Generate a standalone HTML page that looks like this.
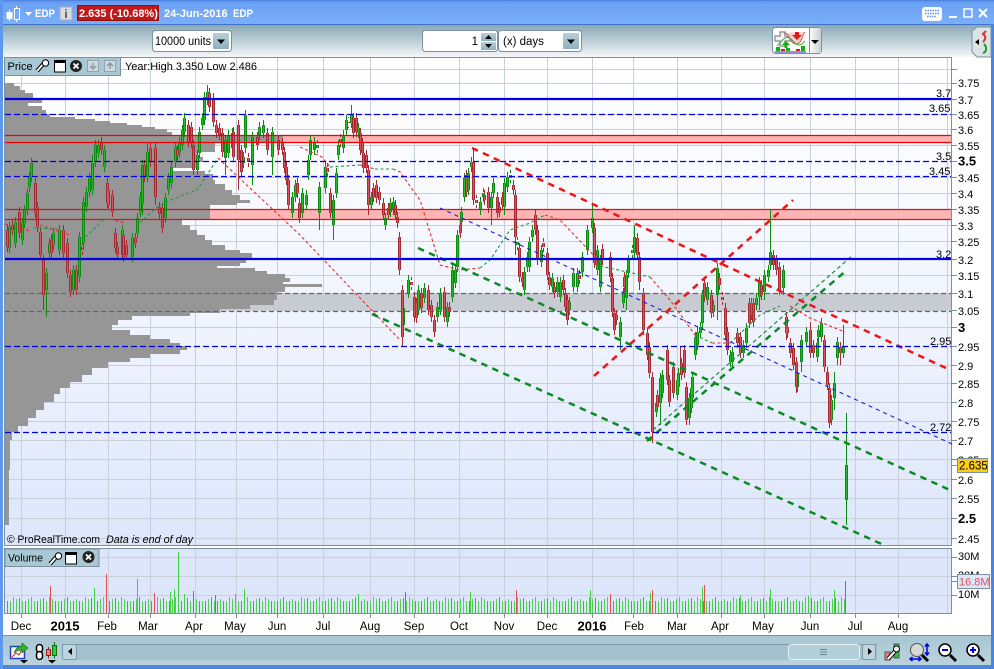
<!DOCTYPE html>
<html><head><meta charset="utf-8"><title>EDP</title>
<style>
html,body{margin:0;padding:0;width:994px;height:669px;overflow:hidden;background:#fff}
svg{display:block}
text{font-family:"Liberation Sans",sans-serif;font-size:11px;fill:#000}
.t{font-weight:bold;fill:#fff;font-size:11px}
.a{font-size:11px}
.b{font-size:13px;font-weight:bold}
.m{text-anchor:middle;font-size:11.500px}
</style></head><body>
<svg width="994" height="669" viewBox="0 0 994 669" xmlns="http://www.w3.org/2000/svg">
<defs>
<linearGradient id="tb" x1="0" y1="0" x2="0" y2="1"><stop offset="0" stop-color="#5f96ee"/><stop offset=".15" stop-color="#6da3f4"/><stop offset="1" stop-color="#7aaef9"/></linearGradient>
<linearGradient id="tl" x1="0" y1="0" x2="0" y2="1"><stop offset="0" stop-color="#8aa9b5"/><stop offset=".5" stop-color="#bccfd6"/><stop offset="1" stop-color="#f6f8f9"/></linearGradient>
<linearGradient id="ch" x1="0" y1="0" x2="0" y2="1"><stop offset="0" stop-color="#ffffff"/><stop offset=".5" stop-color="#f1f5fe"/><stop offset="1" stop-color="#dde6fb"/></linearGradient>
<linearGradient id="bt" x1="0" y1="0" x2="0" y2="1"><stop offset="0" stop-color="#a7c6d3"/><stop offset="1" stop-color="#b9d3dd"/></linearGradient>
<linearGradient id="btn" x1="0" y1="0" x2="0" y2="1"><stop offset="0" stop-color="#b8cfd9"/><stop offset="1" stop-color="#8fb0bf"/></linearGradient>
<linearGradient id="g2" x1="0" y1="0" x2="1" y2="0"><stop offset="0" stop-color="#fff"/><stop offset="1" stop-color="#c8d0d4"/></linearGradient>
<path id="gb" d="M9 227V248M15 222V243M22 223V240M24 210V223M27 193V210M29 177V187M31 163V177M46 273V290M49 243V253M53 233V245M59 230V250M73 270V290M79 237V277M83 202V243M86 192V207M89 178V192M92 163V190M95 145V162M98 145V153M104 150V167M122 230V255M132 238V257M137 218V233M140 197V212M142 165V203M147 152V177M165 198V218M168 178V190M171 167V183M175 147V162M179 142V153M182 130V145M184 118V132M197 155V170M199 132V153M202 118V125M204 97V120M207 92V100M225 140V158M228 135V153M232 133V148M243 157V163M245 115V148M252 137V165M259 127V135M263 125V133M272 132V157M292 197V213M295 185V197M302 193V213M306 195V205M308 160V175M310 140V155M314 142V150M317 145V148M319 187V213M325 167V188M333 200V225M336 173V193M338 145V155M343 135V148M346 120V130M351 115V123M358 128V133M371 197V205M385 218V225M390 203V212M393 202V210M403 308V325M408 280V293M418 290V310M424 288V298M437 307V317M440 293V310M447 307V322M452 270V297M455 270V283M457 235V267M461 212V222M464 178V197M468 173V190M471 162V167M480 202V210M483 193V197M491 197V208M493 183V193M504 183V207M507 177V187M510 175V178M517 242V245M524 272V290M527 257V267M529 242V267M532 230V237M541 250V262M552 278V287M557 282V292M560 282V297M569 302V310M573 273V287M577 273V287M582 257V272M587 230V250M592 218V228M597 250V270M600 260V287M620 322V337M623 293V303M626 275V298M628 260V273M632 250V253M634 237V253M656 403V412M660 378V403M662 375V393M677 380V395M678 373V387M689 398V418M691 388V408M692 377V398M695 337V355M697 332V345M700 327V333M702 295V323M707 287V300M713 305V312M717 268V295M730 355V362M732 352V362M743 345V353M746 328V343M751 303V315M756 298V305M759 282V297M764 275V292M768 270V277M770 252V265M783 270V288M797 373V387M801 340V362M806 332V342M817 343V357M818 330V337M821 323V337M831 400V420M834 383V398M837 342V358M843 347V353M846 465V500"/>
<path id="rb" d="M7 230V247M12 225V230M19 212V233M35 183V213M37 207V227M40 232V255M43 260V295M51 240V253M63 230V253M67 243V273M70 275V292M76 270V290M82 247V250M101 142V150M107 183V203M108 190V205M112 195V212M115 233V248M117 247V255M123 235V257M126 245V255M135 238V243M144 165V177M150 148V162M155 148V197M159 207V214M162 208V228M177 150V155M188 125V142M191 127V143M193 145V170M209 93V107M213 98V122M216 125V133M219 128V135M222 133V152M233 132V157M238 125V160M241 150V172M248 158V162M257 137V145M267 133V150M278 140V150M282 143V150M284 152V168M286 167V180M288 180V205M297 183V193M299 203V218M327 168V172M330 193V213M340 139V142M348 122V123M353 118V133M356 118V132M360 133V150M362 143V153M363 153V168M366 155V168M368 170V205M373 188V197M376 185V198M379 192V200M383 203V215M388 208V215M395 205V215M397 217V223M399 237V270M402 290V337M411 282V285M414 297V317M416 303V318M421 293V308M428 290V310M431 305V317M434 320V332M444 292V317M449 307V312M460 225V233M466 175V192M473 162V200M476 200V203M484 195V200M488 192V208M497 197V213M499 207V212M502 197V205M513 185V190M515 195V237M519 248V277M522 277V282M535 215V230M537 230V260M543 243V247M547 253V275M549 277V285M554 287V293M563 280V290M565 293V307M567 300V320M579 275V279M594 228V263M596 255V265M602 249V260M610 257V277M612 278V312M614 313V330M616 315V320M624 277V287M637 238V255M639 257V282M643 293V330M647 333V355M649 347V373M652 377V432M657 395V407M667 350V380M669 380V402M673 367V393M681 363V375M684 350V373M686 387V420M704 283V297M711 295V313M719 278V285M722 297V300M725 308V335M727 332V350M737 333V343M740 337V353M749 303V323M753 303V322M761 285V295M773 255V265M776 260V270M779 267V290M786 317V333M787 327V333M790 343V353M793 348V365M796 362V387M810 330V353M813 345V353M824 340V367M827 372V385M829 388V423M840 347V353"/>
</defs>

<!-- window frame -->
<rect width="994" height="669" fill="#4d85de"/>
<rect x="0" y="1" width="994" height="23" fill="url(#tb)"/>
<rect x="0" y="0" width="3" height="669" fill="#5f96ee"/>
<rect x="3" y="25" width="988" height="640" fill="#fff"/>
<rect x="3" y="25" width="988" height="32" fill="url(#tl)"/>
<rect x="3" y="24" width="988" height="1" fill="#3f74c8"/>

<!-- title bar -->
<path d="M7 12.500h5v6h-5zM9.500 10v11" fill="#fff" stroke="#fff"/>
<rect x="14.500" y="8.500" width="5" height="11" fill="none" stroke="#fff"/>
<path d="M16.500 6v2M16.500 20v2" stroke="#fff"/>
<path d="M25 12h7l-3.500 4z" fill="#fff"/>
<text x="35" y="17" class="t" textLength="20" lengthAdjust="spacingAndGlyphs">EDP</text>
<rect x="60" y="7" width="12" height="13" fill="#d8dcdf" stroke="#aab"/>
<text x="66" y="18" text-anchor="middle" style="font-weight:bold;font-size:12px;fill:#555">i</text>
<rect x="77.500" y="5.500" width="81" height="15" fill="#c01818" stroke="#8c1010"/>
<text x="79" y="17" class="t">2.635 (-10.68%)</text>
<text x="164" y="17" class="t">24-Jun-2016</text>
<text x="233" y="17" class="t" textLength="20" lengthAdjust="spacingAndGlyphs">EDP</text>
<rect x="922" y="7" width="20" height="14" rx="3" fill="#fff"/>
<path d="M925 10.500h14M925 13.500h14M927 16.500h10" stroke="#5f96ee" stroke-width="1.500" stroke-dasharray="1.500 1"/>
<rect x="949" y="16" width="8" height="2" fill="#fff"/>
<rect x="964" y="9" width="8" height="8" fill="none" stroke="#fff" stroke-width="1.500"/>
<path d="M979 9l8 8M987 9l-8 8" stroke="#fff" stroke-width="2"/>

<!-- top toolbar -->
<rect x="152.500" y="30.500" width="79" height="21" rx="3" fill="#fff" stroke="#7a929f"/>
<text x="155" y="45" style="font-size:11.500px" textLength="56" lengthAdjust="spacingAndGlyphs">10000 units</text>
<rect x="213" y="33" width="16" height="16" rx="1" fill="url(#btn)"/>
<path d="M217 39.500h8l-4 4.500z" fill="#000"/>
<rect x="422.500" y="30.500" width="75" height="21" rx="3" fill="#fff" stroke="#7a929f"/>
<text x="478" y="45" text-anchor="end" style="font-size:11.500px">1</text>
<rect x="481" y="33" width="15" height="8" fill="url(#btn)"/><rect x="481" y="42" width="15" height="8" fill="url(#btn)"/>
<path d="M485 39h7l-3.500-4zM485 44h7l-3.500 4z" fill="#000"/>
<rect x="498.500" y="30.500" width="83" height="21" rx="3" fill="#fff" stroke="#7a929f"/>
<text x="503" y="45" style="font-size:11.500px">(x) days</text>
<rect x="563" y="33" width="16" height="16" rx="1" fill="url(#btn)"/>
<path d="M567 39.500h8l-4 4.500z" fill="#000"/>
<!-- indicator button -->
<rect x="772.500" y="27.500" width="49" height="26" rx="3" fill="#fff" stroke="#7a929f"/>
<rect x="809" y="28" width="12" height="25" fill="url(#g2)"/>
<path d="M809.500 28v25" stroke="#7a929f"/>
<path d="M811 40h8l-4 4z" fill="#000"/>
<path d="M775 36h5v-4h5v4h5v5h-5v5h-5v-5h-5z" fill="#f4f4f4" stroke="#999" stroke-width="1.500"/>
<path d="M784 33c6 0 6 11 12 11s5-7 9-12" fill="#f6cccc" stroke="#d85050" stroke-width="1"/>
<path d="M777 46c6-7 10-12 15-6s8 7 13 1" fill="none" stroke="#3cb03c"/>
<path d="M795 32h4v3h3l-5 5-5-5h3z" fill="#e01818"/>
<path d="M784 44l-4 4h2.500v3h3v-3h2.500z" fill="#13b013" transform="translate(2 -3)"/>
<path d="M776 47h4v4h-4zM786 48h4v3h-4zM801 46h4v5h-4z" fill="#13b013"/><path d="M781 49h4v2h-4zM796 49h4v2h-4z" fill="#d02020"/>
<path d="M775 52h31" stroke="#2222aa"/>
<!-- right tab -->
<path d="M991 27h-14l-5 4v21l5 5h14z" fill="#dce3e7" stroke="#7a929f"/>
<path d="M979 39v6l-4-3z" fill="#000"/>
<path d="M983 42c3-3 3-6 0-8l3-3" fill="none" stroke="#d83030" stroke-width="2"/>
<path d="M983 53c4-1 4-6 1-9" fill="none" stroke="#18a018" stroke-width="2"/>

<!-- chart panels -->
<rect x="4.500" y="57.500" width="947" height="488" fill="url(#ch)" stroke="#7a929f"/>
<rect x="4.500" y="548.500" width="947" height="65" fill="#dde6fb" stroke="#7a929f"/>

<!-- grid -->
<g stroke="#c9cedb" stroke-width="1" fill="none">
<path d="M5 69.500H951M5 83.500H951M5 114.500H951M5 129.500H951M5 145.500H951M5 177.500H951M5 193.500H951M5 209.500H951M5 225.500H951M5 241.500H951M5 275.500H951M5 293.500H951M5 310.500H951M5 327.500H951M5 365.500H951M5 383.500H951M5 402.500H951M5 421.500H951M5 440.500H951M5 459.500H951M5 479.500H951M5 498.500H951M5 518.500H951M5 538.500H951"/>
<path d="M21.500 58V545M65.500 58V545M108.500 58V545M150.500 58V545M195.500 58V545M236.500 58V545M277.500 58V545M323.500 58V545M370.500 58V545M414.500 58V545M459.500 58V545M504.500 58V545M547.500 58V545M592.500 58V545M633.500 58V545M677.500 58V545M721.500 58V545M764.500 58V545M810.500 58V545M855.500 58V545M898.500 58V545M947.500 58V545"/>
<path d="M21.500 549V613M65.500 549V613M108.500 549V613M150.500 549V613M195.500 549V613M236.500 549V613M277.500 549V613M323.500 549V613M370.500 549V613M414.500 549V613M459.500 549V613M504.500 549V613M547.500 549V613M592.500 549V613M633.500 549V613M677.500 549V613M721.500 549V613M764.500 549V613M810.500 549V613M855.500 549V613M898.500 549V613M947.500 549V613M5 557.500H951M5 576.500H951M5 595.500H951"/>
</g>

<!-- bands under profile -->
<rect x="5" y="135" width="946" height="8" fill="#ffb4b4"/>
<rect x="5" y="209" width="946" height="11" fill="#fcb4b4"/>
<rect x="5" y="293" width="946" height="18" fill="#c9cbd3"/>

<!-- volume profile -->
<path fill="#969696" d="M5 83H14V86H20V90H25V93H33V99H42V103H28V106H42V110H46V114H50V117H75V119H95V121H110V123H127V125H142V127H155V129H167V132H172V135H283V143H215V152H198V157H203V162H198V168H172V171H205V174H213V180H215V184H225V190H232V195H240V200H250V203H237V205H210V220H182V225H190V230H197V235H205V240H212V245H225V250H240V253H252V258H246V263H240V266H217V268H255V271H267V274H285V278H290V282H283V284H322V287H285V292H277V300H274V305H250V309H220V313H190V316H132V320H118V325H112V330H130V335H150V339H170V343H180V346H187V350H180V354H150V358H130V362H108V368H92V375H82V382H70V388H60V394H54V402H44V410H36V418H28V426H18V432H12V440H10V470H9V525H5z"/>

<!-- candles -->
<g fill="none" transform="translate(.5 0)">
<path stroke="#0d8a12" stroke-width="1" d="M46 290V317M770 210V252M843 325V347M846 413V525M207 85V92M351 105V115M92 155V163M147 142V152M142 203V215M225 158V175M252 165V185M272 157V175M319 213V230M333 225V240M504 207V215M491 208V225M592 205V218M620 337V350M626 298V310M634 225V237M660 403V425M689 418V425M702 323V330M717 295V320M751 315V320M759 297V310M764 292V300M783 288V295M801 362V372M818 337V345M837 358V365M834 398V410M834 372V383"/>
<path stroke="#a52a32" stroke-width="1" d="M43 295V310M155 197V205M238 160V190M213 110V125M402 337V347M368 205V215M473 148V162M515 237V255M652 432V443M680 347V363M810 322V330M829 423V426M639 282V290M643 330V335M786 333V340M796 387V393M840 355V365"/>
<use href="#gb" y="-5" stroke="#0d8a12" stroke-width="1"/>
<use href="#gb" y="5" stroke="#0d8a12" stroke-width="1"/>
<use href="#rb" y="-5" stroke="#a52a32" stroke-width="1"/>
<use href="#rb" y="5" stroke="#a52a32" stroke-width="1"/>
<use href="#gb" stroke="#0d8a12" stroke-width="3"/>
<use href="#gb" stroke="#22bd22" stroke-width="1"/>
<use href="#rb" stroke="#a52a32" stroke-width="3"/>
<use href="#rb" stroke="#d4555c" stroke-width="1"/>
</g>

<!-- band borders -->
<path d="M5 135.500H951M5 142.500H951" stroke="#f00000" stroke-width="1.200" fill="none"/>
<path d="M5 209.500H951M5 219.500H951" stroke="#e01010" stroke-width="1.200"/>
<path d="M5 293.500H951M5 311.500H951" stroke="#606468" stroke-width="1.200" stroke-dasharray="5 3"/>

<!-- thin dashed MA -->
<g fill="none" stroke-width="1.100" stroke-dasharray="3 2.500">
<path stroke="#1a9a3c" d="M33 228L58 229M80 238L87 236L103 220L110 219M140 223L157 207L173 199L197 190L207 175L218 158M330 167L360 165M375 169L393 169M480 268L490 260L510 230L530 223L545 215M600 266L650 277M695 335L712 343M730 343L760 315L780 306"/>
<path stroke="#ee2a2a" d="M5 224L30 231M40 225L70 235M110 219L125 223M218 158L300 235L400 340M300 147L322 157L330 167M360 165L375 169M393 169L400 172L420 200L440 265L460 270L480 268M545 215L560 220L600 262M650 277L670 300L695 335M712 343L730 343M790 306L810 318L845 332"/>
</g>
<path d="M440 208L952 444" stroke="#1a1ae0" stroke-width="1.100" stroke-dasharray="4 4" fill="none"/>
<path d="M653 430L853 255" stroke="#1a8a3c" stroke-width="1.200" stroke-dasharray="4 3" fill="none"/>

<!-- thick trend lines -->
<g fill="none" stroke-width="2.500" stroke-dasharray="6.500 5.500">
<path stroke="#f01414" d="M472 148L948 369M594 376L793 200"/>
<path stroke="#0c8a22" d="M418 248L952 491M372 314L886 546M647 441L847 270"/>
</g>

<!-- horizontal levels -->
<path d="M5 99H951M5 259H951" stroke="#0000e0" stroke-width="2.200"/>
<path d="M5 114.500H951M5 161.500H951M5 176.500H951M5 346.500H951M5 432.500H951" stroke="#0000e0" stroke-width="1.200" stroke-dasharray="6 3"/>

<!-- level labels -->
<text x="936" y="97">3.7</text><text x="929" y="112">3.65</text><text x="936" y="160">3.5</text><text x="929" y="175">3.45</text><text x="936" y="258">3.2</text><text x="930" y="345">2.95</text><text x="930" y="431">2.72</text>

<!-- legends -->
<rect x="4.500" y="57.500" width="116" height="18" fill="#a9c8d5" stroke="#7a929f"/>
<text x="7.500" y="70">Price</text>
<path d="M37 71L45 62" stroke="#000" stroke-width="4"/><path d="M37 71L45 62" stroke="#fff" stroke-width="2"/><circle cx="45.500" cy="63" r="3.200" fill="#fff" stroke="#000"/>
<rect x="54.500" y="60.500" width="11" height="11.500" fill="#fff" stroke="#000"/><rect x="54" y="60" width="12" height="3" fill="#000"/>
<circle cx="76" cy="66" r="6" fill="#222"/><path d="M73.500 63.500l5 5M78.500 63.500l-5 5" stroke="#fff" stroke-width="1.800"/>
<rect x="87.500" y="60.500" width="11" height="11" fill="#cfdadf" stroke="#93a4ad"/><path d="M93 63v6M90 66l3 3 3-3" stroke="#8a9aa2" stroke-width="1.500" fill="none"/>
<rect x="104.500" y="60.500" width="11" height="11" fill="#cfdadf" stroke="#93a4ad"/><path d="M110 69v-6M107 66l3-3 3 3" stroke="#8a9aa2" stroke-width="1.500" fill="none"/>
<text x="125" y="70" textLength="132" lengthAdjust="spacingAndGlyphs">Year:High 3.350 Low 2.486</text>
<text x="7" y="543" textLength="93" lengthAdjust="spacingAndGlyphs">&#169; ProRealTime.com</text>
<text x="106" y="543" style="font-style:italic" textLength="87" lengthAdjust="spacingAndGlyphs">Data is end of day</text>

<!-- axis -->
<path d="M952 69.500h5M952 83.500h5M952 99.500h5M952 114.500h5M952 129.500h5M952 145.500h5M952 161.500h5M952 177.500h5M952 193.500h5M952 209.500h5M952 225.500h5M952 241.500h5M952 259.500h5M952 275.500h5M952 293.500h5M952 310.500h5M952 327.500h5M952 346.500h5M952 365.500h5M952 383.500h5M952 402.500h5M952 421.500h5M952 440.500h5M952 459.500h5M952 465.500h5M952 479.500h5M952 498.500h5M952 518.500h5M952 538.500h5M952 557.500h5M952 576.500h5M952 595.500h5M952 581.500h5" stroke="#7a929f"/>
<text x="958" y="87">3.75</text><text x="958" y="104">3.7</text><text x="958" y="119">3.65</text><text x="958" y="134">3.6</text><text x="958" y="150">3.55</text><text class="b" x="958" y="165.500">3.5</text><text x="958" y="182">3.45</text><text x="958" y="198">3.4</text><text x="958" y="214">3.35</text><text x="958" y="230">3.3</text><text x="958" y="246">3.25</text><text x="958" y="264">3.2</text><text x="958" y="280">3.15</text><text x="958" y="298">3.1</text><text x="958" y="315">3.05</text><text class="b" x="958" y="332">3</text><text x="958" y="351">2.95</text><text x="958" y="370">2.9</text><text x="958" y="388">2.85</text><text x="958" y="407">2.8</text><text x="958" y="426">2.75</text><text x="958" y="445">2.7</text><text x="958" y="464">2.65</text><text x="958" y="484">2.6</text><text x="958" y="503">2.55</text><text class="b" x="958" y="523">2.5</text><text x="958" y="543">2.45</text>
<text x="958" y="560">30M</text><text x="958" y="579">20M</text><text x="958" y="598">10M</text>
<rect x="957.500" y="458.500" width="30" height="14" fill="#fdcb12" stroke="#7a929f"/>
<text x="959" y="469.500" style="font-size:11.500px">2.635</text>
<rect x="957.500" y="574.500" width="32" height="14" fill="#dde6fb" stroke="#7a929f"/>
<text x="959" y="585.500" style="fill:#e05656">16.8M</text>

<!-- volume -->
<g fill="none">
<path d="M10 607H846" stroke="#4fd24f" stroke-width="12" stroke-dasharray="1 5"/>
<path d="M7 607H846" stroke="#e05c5c" stroke-width="12" stroke-dasharray="1 5"/>
<path d="M13 605H846" stroke="#4fd24f" stroke-width="16" stroke-dasharray="1 17"/>
<path d="M19 605.500H846" stroke="#e05c5c" stroke-width="15" stroke-dasharray="1 23"/>
<path d="M16 606H846" stroke="#4fd24f" stroke-width="14" stroke-dasharray="1 11"/>
<path stroke="#40d040" stroke-width="1" d="M178.500 552V613M137.500 579V613M94.500 588V613M174.500 589V613M170.500 592V613M244.500 589V613M235.500 594V613M184.500 594V613M702.500 587V613M770.500 589V613M808.500 596V613M834.500 590V613M590.500 590V613M470.500 592V613M358.500 594V613M650.500 593V613M740.500 595V613"/>
<path stroke="#e05050" stroke-width="1" d="M50.500 586V613M106.500 574V613M193.500 591V613M215.500 595V613M154.500 593V613M704.500 585V613M845.500 581V613M405.500 592V613M516.500 590V613M610.500 594V613M652.500 590V613"/>
</g>
<rect x="5" y="549" width="94" height="17.500" fill="#a9c8d5" stroke="#7a929f"/>
<text x="8" y="561.500" textLength="35" lengthAdjust="spacingAndGlyphs">Volume</text>
<path d="M50 564L58 555" stroke="#000" stroke-width="4"/><path d="M50 564L58 555" stroke="#fff" stroke-width="2"/><circle cx="58.500" cy="556" r="3.200" fill="#fff" stroke="#000"/>
<rect x="65.500" y="552.500" width="11" height="11.500" fill="#fff" stroke="#000"/><rect x="65" y="552" width="12" height="3" fill="#000"/>
<circle cx="88.500" cy="557" r="6" fill="#222"/><path d="M86 554.500l5 5M91 554.500l-5 5" stroke="#fff" stroke-width="1.800"/>

<!-- date axis -->
<path d="M21.500 613v5M65.500 613v5M108.500 613v5M150.500 613v5M195.500 613v5M236.500 613v5M277.500 613v5M323.500 613v5M370.500 613v5M414.500 613v5M459.500 613v5M504.500 613v5M547.500 613v5M592.500 613v5M633.500 613v5M677.500 613v5M721.500 613v5M764.500 613v5M810.500 613v5M855.500 613v5M898.500 613v5" stroke="#7a929f"/>
<text class="m" x="21" y="630">Dec</text><text class="b" x="65" y="630.500" text-anchor="middle">2015</text><text class="m" x="107" y="630">Feb</text><text class="m" x="148" y="630">Mar</text><text class="m" x="194" y="630">Apr</text><text class="m" x="235" y="630">May</text><text class="m" x="277" y="630">Jun</text><text class="m" x="323" y="630">Jul</text><text class="m" x="370" y="630">Aug</text><text class="m" x="414" y="630">Sep</text><text class="m" x="459" y="630">Oct</text><text class="m" x="504" y="630">Nov</text><text class="m" x="547" y="630">Dec</text><text class="b" x="592" y="630.500" text-anchor="middle">2016</text><text class="m" x="634" y="630">Feb</text><text class="m" x="677" y="630">Mar</text><text class="m" x="720" y="630">Apr</text><text class="m" x="763" y="630">May</text><text class="m" x="810" y="630">Jun</text><text class="m" x="855" y="630">Jul</text><text class="m" x="898" y="630">Aug</text>

<!-- bottom toolbar -->
<rect x="3" y="635" width="988" height="30" fill="url(#bt)"/>
<rect x="3" y="635" width="988" height="1" fill="#7a929f"/>
<rect x="62" y="644" width="815" height="16" fill="#a4c2ce"/>
<path d="M62 644.500H877" stroke="#7f99a5"/>
<rect x="62.500" y="644.500" width="14" height="15" rx="2" fill="#bcd5df" stroke="#7f99a5"/>
<path d="M72 648v7l-4-3.500z" fill="#000"/>
<rect x="788.500" y="644.500" width="71" height="15" rx="3" fill="#b3d0da" stroke="#e6eef2"/>
<path d="M820 649.500h7M820 652h7M820 654.500h7" stroke="#6e8894"/>
<rect x="862.500" y="644.500" width="13" height="15" rx="2" fill="#bcd5df" stroke="#7f99a5"/>
<path d="M868 648v7l4-3.500z" fill="#000"/>
<!-- bottom left icons -->
<rect x="10.500" y="646.500" width="14" height="12" fill="#fff" stroke="#2040c0" stroke-width="1.500"/>
<path d="M12 657l4-4 3 2 3-6" stroke="#d02020" fill="none"/>
<path d="M14 653c2-5 5-7 8-7v-3l6 5-6 5v-3c-3 0-6 1-8 3z" fill="#30b030" stroke="#1a7a1a" stroke-width=".7"/>
<path d="M20 660h8l-4 3.500z" fill="#000"/>
<rect x="36.500" y="644.500" width="6" height="8" rx="3" fill="#fff" stroke="#000" stroke-width="1.500"/><rect x="36.500" y="651.500" width="6" height="8" rx="3" fill="#fff" stroke="#000" stroke-width="1.500"/>
<rect x="46.500" y="649.500" width="4" height="6" fill="#f08080" stroke="#902020"/><path d="M48.500 647v2.500M48.500 655.500v3" stroke="#902020"/>
<rect x="52.500" y="645.500" width="4" height="10" fill="#30d030" stroke="#107010"/><path d="M54.500 642v3.500M54.500 655.500v3" stroke="#107010"/>
<path d="M48 660h8l-4 3.500z" fill="#000"/>
<!-- bottom right icons -->
<rect x="894" y="644" width="5" height="14" fill="#30c030" stroke="#555"/><rect x="885" y="652" width="5" height="8" fill="#e08080" stroke="#555"/>
<path d="M888 659L896 650" stroke="#000" stroke-width="4"/><path d="M888 659L896 650" stroke="#fff" stroke-width="2.200"/><circle cx="896.500" cy="649" r="3" fill="#fff" stroke="#000"/>
<circle cx="917" cy="650" r="6.500" fill="#d8d8d8" stroke="#555"/><path d="M922 655l6 6" stroke="#000" stroke-width="3"/>
<path d="M927 645v9M925 646.500l2-2.500 2 2.500M925 652.500l2 2.500 2-2.500" stroke="#0000e0" fill="none" stroke-width="1.500"/>
<path d="M911 659h9M912.500 657l-2.500 2 2.500 2M918.500 657l2.500 2-2.500 2" stroke="#0000e0" fill="none" stroke-width="1.500"/>
<circle cx="945" cy="650" r="6" fill="#fff" stroke="#000" stroke-width="1.500"/><path d="M942 650h6" stroke="#0000e0" stroke-width="2"/><path d="M950 655l6 6" stroke="#000" stroke-width="3"/>
<circle cx="973" cy="650" r="6" fill="#fff" stroke="#000" stroke-width="1.500"/><path d="M970 650h6M973 647v6" stroke="#0000e0" stroke-width="2"/><path d="M978 655l6 6" stroke="#000" stroke-width="3"/>
</svg>
</body></html>
